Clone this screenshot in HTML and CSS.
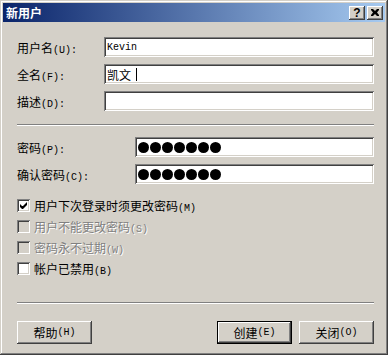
FILE: index.html
```html
<!DOCTYPE html>
<html lang="zh-CN">
<head>
<meta charset="utf-8">
<title>新用户</title>
<link rel="stylesheet" href="styles.css">
</head>
<body>
<div class="window">
  <div class="titlebar">
    <span class="title">新用户</span>
    <div class="tbtns">
      <span class="tbtn help">?</span>
      <span class="tbtn">
        <svg width="8" height="7" viewBox="0 0 8 7"><path d="M0 0h2l2 2 2-2h2v1l-2 2.5 2 2.5v1h-2l-2-2-2 2h-2v-1l2-2.5-2-2.5z" fill="#000"/></svg>
      </span>
    </div>
  </div>
  <div class="body">
    <div class="fields">
      <div class="row"><span class="label">用户名<span class="acc">(U):</span></span><div class="edit"><span class="mono">Kevin</span></div></div>
      <div class="row"><span class="label">全名<span class="acc">(F):</span></span><div class="edit"><span>凯文</span><span class="caret"></span></div></div>
      <div class="row"><span class="label">描述<span class="acc">(D):</span></span><div class="edit"></div></div>
    </div>
    <div class="sep sep1"></div>
    <div class="fields pw">
      <div class="row"><span class="label">密码<span class="acc">(P):</span></span><div class="edit"><span class="dots"><i></i><i></i><i></i><i></i><i></i><i></i><i></i></span></div></div>
      <div class="row"><span class="label">确认密码<span class="acc">(C):</span></span><div class="edit"><span class="dots"><i></i><i></i><i></i><i></i><i></i><i></i><i></i></span></div></div>
    </div>
    <div class="checks">
      <div class="check"><span class="box"><svg width="7" height="7" viewBox="0 0 7 7"><path d="M0 2v3l2 2h1l4-4v-3l-4 4h-1z" fill="#000"/></svg></span><span>用户下次登录时须更改密码<span class="acc">(M)</span></span></div>
      <div class="check disabled"><span class="box"></span><span>用户不能更改密码<span class="acc">(S)</span></span></div>
      <div class="check disabled"><span class="box"></span><span>密码永不过期<span class="acc">(W)</span></span></div>
      <div class="check"><span class="box"></span><span>帐户已禁用<span class="acc">(B)</span></span></div>
    </div>
    <div class="sep sep2"></div>
    <div class="buttons">
      <span class="btn">帮助<span class="acc">(H)</span></span>
      <span class="spacer"></span>
      <span class="btn default">创建<span class="acc">(E)</span></span>
      <span class="btn">关闭<span class="acc">(O)</span></span>
    </div>
  </div>
</div>
</body>
</html>
```
FILE: styles.css
```css
* { box-sizing: border-box; margin: 0; padding: 0; }
body {
  background: #fff;
  font-family: "Noto Sans CJK SC", sans-serif;
  font-size: 12px;
  color: #000;
}
.window {
  width: 388px;
  height: 355px;
  background: #d4d0c8;
  padding: 3px;
  box-shadow: inset -1px -1px #404040, inset 1px 1px #d4d0c8, inset -2px -2px #808080, inset 2px 2px #fff;
  display: flex;
  flex-direction: column;
}
.titlebar {
  height: 19px;
  background: linear-gradient(to right, #0a246a, #a6caf0);
  display: flex;
  align-items: center;
  justify-content: space-between;
  padding: 0 2px 0 3px;
}
.title {
  color: #fff;
  font-weight: bold;
  font-size: 12px;
  line-height: 19px;
}
.tbtns { display: flex; gap: 2px; }
.tbtn {
  width: 16px;
  height: 14px;
  background: #d4d0c8;
  box-shadow: inset -1px -1px #404040, inset 1px 1px #fff, inset -2px -2px #808080;
  display: flex;
  align-items: center;
  justify-content: center;
}
.tbtn.help {
  font-family: "Liberation Sans", sans-serif;
  font-weight: bold;
  font-size: 12px;
  line-height: 14px;
}
.body {
  padding: 15px 11px 0 14px;
  display: flex;
  flex-direction: column;
}
.fields { display: flex; flex-direction: column; gap: 7px; }
.row { display: flex; align-items: center; height: 20px; }
.label { width: 87px; flex: none; white-space: nowrap; }
.pw .label { width: 118px; }
.acc {
  font-family: "Liberation Mono", monospace;
  font-size: 10px;
}
.edit {
  flex: 1;
  height: 20px;
  background: #fff;
  box-shadow: inset 1px 1px #808080, inset -1px -1px #fff, inset 2px 2px #404040, inset -2px -2px #d4d0c8;
  padding: 0 3px;
  display: flex;
  align-items: center;
  white-space: nowrap;
}
.mono {
  font-family: "Liberation Mono", monospace;
  font-size: 10px;
}
.caret {
  display: block;
  width: 1px;
  height: 13px;
  margin-left: 5px;
  background: #000;
}
.dots { display: flex; gap: 1px; }
.dots i {
  display: block;
  width: 11px;
  height: 11px;
  border-radius: 50%;
  background: #000;
}
.sep {
  height: 2px;
  border-top: 1px solid #808080;
  border-bottom: 1px solid #fff;
}
.sep1 { margin: 13px 0 11px; }
.checks {
  margin-top: 15px;
  display: flex;
  flex-direction: column;
  gap: 8px;
}
.check { display: flex; align-items: center; height: 13px; gap: 4px; white-space: nowrap; }
.box {
  width: 13px;
  height: 13px;
  flex: none;
  background: #fff;
  box-shadow: inset 1px 1px #808080, inset -1px -1px #fff, inset 2px 2px #404040, inset -2px -2px #d4d0c8;
  display: flex;
  align-items: center;
  justify-content: center;
}
.check.disabled { color: #808080; text-shadow: 1px 1px #fff; }
.check.disabled .box { background: #d4d0c8; }
.sep2 { margin: 27px 0 17px; }
.buttons { display: flex; gap: 7px; }
.spacer { flex: 1; }
.btn {
  width: 75px;
  height: 23px;
  display: flex;
  align-items: center;
  justify-content: center;
  background: #d4d0c8;
  box-shadow: inset -1px -1px #404040, inset 1px 1px #fff, inset -2px -2px #808080, inset 2px 2px #d4d0c8;
}
.btn.default {
  box-shadow: inset 0 0 0 1px #000, inset -2px -2px #404040, inset 2px 2px #fff, inset -3px -3px #808080;
}
```
